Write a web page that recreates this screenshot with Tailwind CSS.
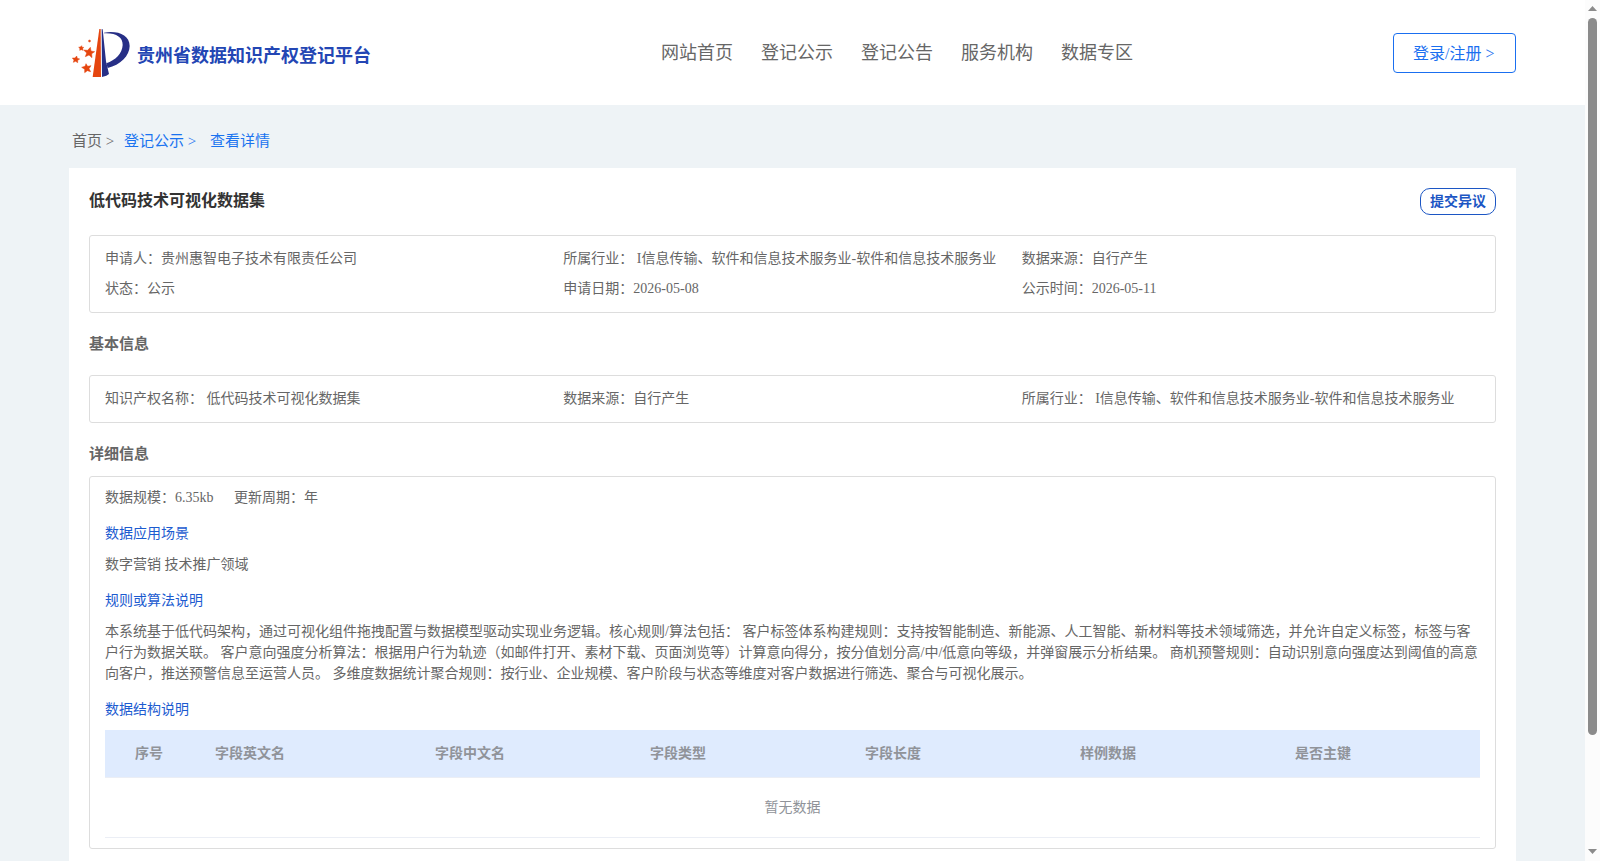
<!DOCTYPE html>
<html lang="zh-CN">
<head>
    <meta charset="UTF-8">
    <meta name="viewport" content="width=device-width, initial-scale=1.0">
    <title>贵州省数据知识产权登记平台</title>
    <script src="https://cdn.jsdelivr.net/npm/@tailwindcss/browser@4"></script>
</head>
<body class="h-screen overflow-hidden bg-[#eef3f6] font-['Liberation_Serif','Noto_Sans_CJK_SC',serif] text-sm text-[#666]">
<div class="flex h-full">
    <div class="w-[1585px] h-full overflow-hidden">
        <header class="h-[105px] bg-white pl-[72px] pr-[69px] flex">
            <div class="w-[589px] flex">
                <svg class="mt-7 w-[60px] h-[50px]" viewBox="36 24 180 150">
                    <path fill="#e5450f" d="M118 27h4l1 144H98z"/>
                    <path fill="#272f86" d="M125 27l3 1 10 96 9 38-8 5-13 4z"/>
                    <path fill="#272f86" d="M132 38c40-7 77 6 77 40 0 29-28 57-66 66l-4-14c27-9 48-30 49-55 1-23-20-37-56-35z"/>
                    <g fill="#e5450f" stroke="#e5450f" stroke-width="1.500">
                        <path d="M91 82l2 11 11 2-9 6 1 12-9-8-11 5 4-11-9-9 12 1z"/>
                        <path d="M50 108l2 7 7 2-6 4 0 7-6-4-7 3 2-7-5-6 8 0z"/>
                        <path d="M78 131l5 8 10-2-6 9 5 9-10-3-8 6 0-10-9-6 10-3z"/>
                        <path d="M65 77l1 5 5 0-3 4 1 5-5-2-5 2 1-5-4-4 5-1z"/>
                        <circle cx="88.500" cy="63" r="3"/>
                    </g>
                </svg>
                <h1 class="ml-[5px] mt-11 h-6 text-[18px] leading-6 font-bold text-[#2346b4]">贵州省数据知识产权登记平台</h1>
            </div>
            <nav class="mt-[41px] h-6 leading-6 flex gap-7 text-[18px]">
                <a>网站首页</a>
                <a>登记公示</a>
                <a>登记公告</a>
                <a>服务机构</a>
                <a>数据专区</a>
            </nav>
            <button class="ml-auto mt-[33px] w-[123px] h-10 rounded border border-[#1a6ff0] text-[#1a6ff0] text-[16px] leading-[40px] pl-[19px] text-left">登录/注册 &gt;</button>
        </header>

        <main class="mx-[69px]">
            <div class="h-[63px] pt-[26px] pl-[3px] flex text-[15px] leading-5">
                <span class="w-[52px]">首页 &gt;</span>
                <span class="w-[86px] text-[#1a73f0]">登记公示 &gt;</span>
                <span class="text-[#1a73f0]">查看详情</span>
            </div>

            <section class="bg-white h-[800px] px-5 pt-5">
                <div class="h-[47px] flex justify-between items-start">
                    <h2 class="text-[16px] leading-[26px] font-bold text-[#333]">低代码技术可视化数据集</h2>
                    <button class="w-[76px] h-[27px] leading-[25px] rounded-[10px] border border-[#1c56c4] text-[#1c56c4] font-bold">提交异议</button>
                </div>

                <div class="h-[78px] border border-[#ddd] rounded-[3px] px-[15px] py-2 grid grid-cols-3 leading-[29px] auto-rows-[30px] whitespace-nowrap">
                    <div>申请人：贵州惠智电子技术有限责任公司</div>
                    <div>所属行业： I信息传输、软件和信息技术服务业-软件和信息技术服务业</div>
                    <div>数据来源：自行产生</div>
                    <div>状态：公示</div>
                    <div>申请日期：2026-05-08</div>
                    <div>公示时间：2026-05-11</div>
                </div>

                <h3 class="h-[62px] leading-[63px] text-[15px] font-bold">基本信息</h3>
                <div class="h-12 border border-[#ddd] rounded-[3px] px-[15px] py-2 grid grid-cols-3 leading-[29px] auto-rows-[30px] whitespace-nowrap">
                    <div>知识产权名称： 低代码技术可视化数据集</div>
                    <div>数据来源：自行产生</div>
                    <div>所属行业： I信息传输、软件和信息技术服务业-软件和信息技术服务业</div>
                </div>

                <h3 class="h-[53px] leading-[63px] text-[15px] font-bold">详细信息</h3>
                <div class="h-[373px] border border-[#ddd] rounded-[3px] px-[15px] pt-[10px] leading-[21px]">
                    <div class="flex">
                        <span class="w-[129px]">数据规模：6.35kb</span>
                        <span>更新周期：年</span>
                    </div>
                    <h4 class="mt-[15px] text-[#1c5bd0]">数据应用场景</h4>
                    <p class="mt-[10px]">数字营销 技术推广领域</p>
                    <h4 class="mt-[15px] text-[#1c5bd0]">规则或算法说明</h4>
                    <p class="mt-[10px]">本系统基于低代码架构，通过可视化组件拖拽配置与数据模型驱动实现业务逻辑。核心规则/算法包括： 客户标签体系构建规则：支持按智能制造、新能源、人工智能、新材料等技术领域筛选，并允许自定义标签，标签与客户行为数据关联。 客户意向强度分析算法：根据用户行为轨迹（如邮件打开、素材下载、页面浏览等）计算意向得分，按分值划分高/中/低意向等级，并弹窗展示分析结果。 商机预警规则：自动识别意向强度达到阈值的高意向客户，推送预警信息至运营人员。 多维度数据统计聚合规则：按行业、企业规模、客户阶段与状态等维度对客户数据进行筛选、聚合与可视化展示。</p>
                    <h4 class="mt-[15px] text-[#1c5bd0]">数据结构说明</h4>

                    <div class="mt-[10px] h-12 leading-[47px] bg-[#dfebfe] border-b border-[#ebeef5] text-[#909399] font-bold grid grid-cols-[80px_220px_215px_215px_215px_215px_1fr] pl-[30px]">
                        <div>序号</div>
                        <div>字段英文名</div>
                        <div>字段中文名</div>
                        <div>字段类型</div>
                        <div>字段长度</div>
                        <div>样例数据</div>
                        <div>是否主键</div>
                    </div>
                    <div class="h-[60px] leading-[59px] text-center text-[#909399] border-b border-[#ebeef5]">暂无数据</div>
                </div>
            </section>
        </main>
    </div>

    <!-- scrollbar -->
    <div class="w-[15px] h-full bg-[#fcfcfc] flex flex-col items-center">
        <svg class="mt-[6px] w-[9px] h-[5px]" viewBox="0 0 9 5"><path fill="#8b8b8b" d="M0 5L4.500 0 9 5z"/></svg>
        <div class="mt-[7px] w-[9px] h-[717px] rounded-full bg-[#8b8b8b]"></div>
        <svg class="mt-auto mb-[7px] w-[9px] h-[5px]" viewBox="0 0 9 5"><path fill="#8b8b8b" d="M0 0h9L4.500 5z"/></svg>
    </div>
</div>
</body>
</html>
